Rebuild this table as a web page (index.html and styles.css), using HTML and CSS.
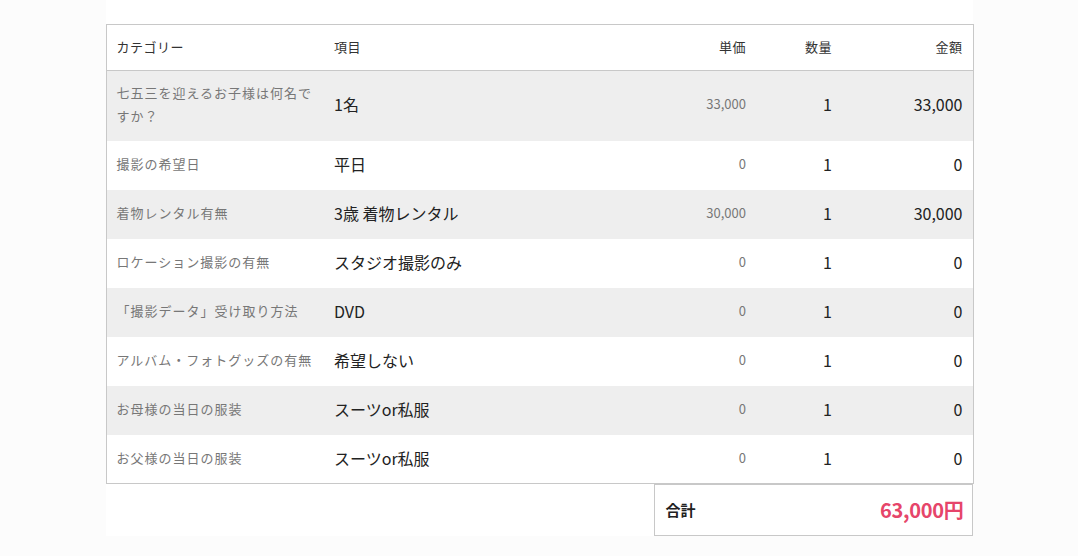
FILE: index.html
```html
<!DOCTYPE html>
<html lang="ja">
<head>
<meta charset="utf-8">
<title>見積もり</title>
<link rel="stylesheet" href="styles.css">
</head>
<body>
<div class="panel">
  <table class="estimate">
    <colgroup>
      <col class="c-cat"><col class="c-item"><col class="c-unit"><col class="c-qty"><col class="c-amt">
    </colgroup>
    <thead>
      <tr>
        <th class="cat">カテゴリー</th>
        <th class="item">項目</th>
        <th class="num">単価</th>
        <th class="num">数量</th>
        <th class="num">金額</th>
      </tr>
    </thead>
    <tbody>
      <tr><td class="cat">七五三を迎えるお子様は何名ですか？</td><td class="item">1名</td><td class="unit">33,000</td><td class="qty">1</td><td class="amt">33,000</td></tr>
      <tr><td class="cat">撮影の希望日</td><td class="item">平日</td><td class="unit">0</td><td class="qty">1</td><td class="amt">0</td></tr>
      <tr><td class="cat">着物レンタル有無</td><td class="item">3歳 着物レンタル</td><td class="unit">30,000</td><td class="qty">1</td><td class="amt">30,000</td></tr>
      <tr><td class="cat">ロケーション撮影の有無</td><td class="item">スタジオ撮影のみ</td><td class="unit">0</td><td class="qty">1</td><td class="amt">0</td></tr>
      <tr><td class="cat">「撮影データ」受け取り方法</td><td class="item">DVD</td><td class="unit">0</td><td class="qty">1</td><td class="amt">0</td></tr>
      <tr><td class="cat">アルバム・フォトグッズの有無</td><td class="item">希望しない</td><td class="unit">0</td><td class="qty">1</td><td class="amt">0</td></tr>
      <tr><td class="cat">お母様の当日の服装</td><td class="item">スーツor私服</td><td class="unit">0</td><td class="qty">1</td><td class="amt">0</td></tr>
      <tr><td class="cat">お父様の当日の服装</td><td class="item">スーツor私服</td><td class="unit">0</td><td class="qty">1</td><td class="amt">0</td></tr>
    </tbody>
  </table>
  <div class="total-row">
    <div class="total">
      <span class="total-label">合計</span>
      <span class="total-value">63,000円</span>
    </div>
  </div>
</div>
</body>
</html>
```

FILE: styles.css
```css
html, body {
  margin: 0;
  padding: 0;
  background: #fcfcfc;
  font-family: "Noto Sans CJK JP", "Noto Sans", sans-serif;
  color: #222;
}

.panel {
  width: 867px;
  margin: 0 auto;
  background: #fff;
  padding-top: 24px;
  box-sizing: border-box;
}

.estimate {
  width: 867px;
  border-collapse: collapse;
  table-layout: fixed;
  border: 1px solid #c8c8c8;
}

.c-cat { width: 218px; }
.c-item { width: 326px; }
.c-unit { width: 106px; }
.c-qty { width: 86px; }
.c-amt { width: 131px; }

.estimate th {
  height: 43px;
  padding: 0 10px 2px;
  font-size: 13px;
  font-weight: normal;
  color: #333;
  text-align: left;
  border-bottom: 1px solid #c8c8c8;
  letter-spacing: 0.5px;
}

.estimate th.num { text-align: right; }

.estimate td {
  padding: 10px 10px 14px;
  vertical-align: middle;
}

.estimate tbody tr:nth-child(odd) td { background: #eeeeee; }

.estimate td.cat {
  font-size: 13px;
  line-height: 23px;
  color: #777;
  letter-spacing: 1px;
}

.estimate td.item {
  font-size: 16px;
  line-height: 24px;
  color: #222;
}

.estimate td.unit {
  font-size: 13px;
  line-height: 24px;
  color: #777;
  text-align: right;
}

.estimate td.qty,
.estimate td.amt {
  font-size: 16px;
  line-height: 24px;
  color: #222;
  text-align: right;
}

.estimate tbody td { height: 25px; }

.estimate tbody tr:last-child td { padding-bottom: 13px; }

.total-row {
  display: flex;
  justify-content: flex-end;
}

.total {
  width: 319px;
  height: 52px;
  box-sizing: border-box;
  border: 1px solid #c8c8c8;
  display: flex;
  align-items: center;
  justify-content: space-between;
  padding: 0 8px 2px 11px;
}

.total-label {
  font-size: 15px;
  font-weight: bold;
  color: #222;
}

.total-value {
  font-size: 20px;
  font-weight: bold;
  color: #e6456a;
  letter-spacing: -0.3px;
}
```
